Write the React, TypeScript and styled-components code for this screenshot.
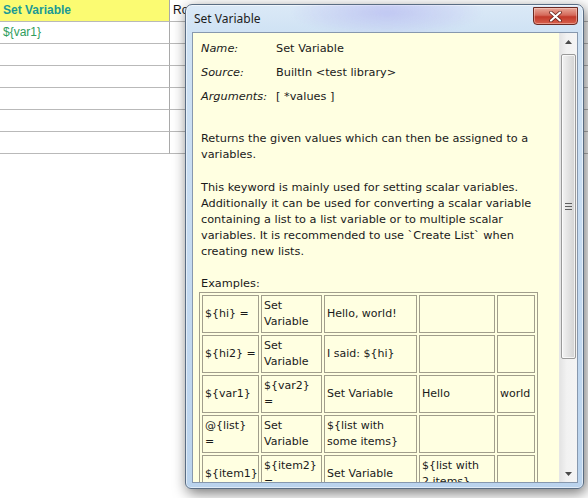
import React from "react";
import styled, { createGlobalStyle } from "styled-components";

const GlobalStyle = createGlobalStyle`
  html, body { margin: 0; padding: 0; background: #ffffff; }
  body { width: 588px; height: 498px; overflow: hidden; }
`;

const Stage = styled.div`
  position: relative;
  width: 588px;
  height: 498px;
  overflow: hidden;
  background: #ffffff;
`;

/* ---------- background grid editor ---------- */
const Sheet = styled.div`
  display: grid;
  grid-template-columns: 170px 1fr;
  width: 588px;
  font-family: "Liberation Sans", Arial, sans-serif;
  font-size: 12px;
`;

const SheetCell = styled.div<{ $head?: boolean; $first?: boolean }>`
  height: 21px;
  line-height: 21px;
  padding-left: 3px;
  border-bottom: 1px solid #b9b9b9;
  border-right: ${(p) => (p.$first ? "1px solid #a9a9a9" : "none")};
  background: ${(p) => (p.$head && p.$first ? "#fbfb72" : "#ffffff")};
  color: ${(p) => (p.$head ? (p.$first ? "#1a9a94" : "#111") : "#2f9d5c")};
  font-weight: ${(p) => (p.$head && p.$first ? "bold" : "normal")};
  white-space: nowrap;
  overflow: hidden;
`;

/* ---------- floating window ---------- */
const Window = styled.div`
  position: absolute;
  left: 185px;
  top: 4px;
  width: 399px;
  height: 485px;
  box-sizing: border-box;
  border: 1px solid #5a6d83;
  border-radius: 7px 7px 6px 6px;
  background: linear-gradient(to bottom, #dbe9f7 0px, #cfe2f4 28px, #c3d9f0 60%, #bad3ed 100%);
  box-shadow: inset 0 0 0 1px rgba(255, 255, 255, 0.55), 2px 4px 14px rgba(0, 0, 0, 0.55);
  display: flex;
  flex-direction: column;
  padding: 0 5px 5px 6px;
`;

const TitleBar = styled.div`
  position: relative;
  height: 27px;
  display: flex;
  align-items: flex-start;
  justify-content: space-between;
  overflow: hidden;
`;

const GlassGlow = styled.div`
  position: absolute;
  left: 100px;
  top: -8px;
  width: 190px;
  height: 38px;
  background: radial-gradient(ellipse at 50% 40%, rgba(150, 140, 235, 0.35), rgba(170, 160, 240, 0.12) 55%, rgba(200, 200, 255, 0) 72%);
  filter: blur(2px);
`;

const Title = styled.span`
  position: relative;
  margin: 6px 0 0 2px;
  font-family: "Noto Sans", "Open Sans", sans-serif;
  font-size: 12px;
  line-height: 16px;
  color: #1c1c1c;
`;

const CloseButton = styled.div`
  position: relative;
  width: 43px;
  height: 16px;
  margin-top: 2px;
  border: 1px solid #6b2a22;
  border-radius: 0 0 4px 4px;
  background: linear-gradient(to bottom, #e8a899 0%, #d5695a 45%, #c2392a 55%, #d7604c 100%);
  box-shadow: inset 0 0 0 1px rgba(255, 220, 210, 0.45);
  display: flex;
  align-items: center;
  justify-content: center;
`;

const Client = styled.div`
  flex: 1;
  display: flex;
  border: 1px solid #8798ae;
  background: #ffffe1;
  overflow: hidden;
  min-height: 0;
`;

const Scroller = styled.div`
  flex: 1;
  overflow: hidden;
  padding: 8px 0 0 8px;
  font-family: "DejaVu Sans", Verdana, sans-serif;
  font-size: 11.3px;
  line-height: 16px;
  color: #1a1a1a;
`;

const Meta = styled.div`
  display: grid;
  grid-template-columns: 75px auto;
  row-gap: 8px;
`;

const Label = styled.span`
  font-style: italic;
`;

const Para = styled.p<{ $top: number }>`
  margin: ${(p) => p.$top}px 0 0 0;
  white-space: nowrap;
`;

const ExampleTable = styled.table`
  width: 339px;
  border: 1px solid #a19e8c;
  border-spacing: 2px;
  table-layout: fixed;
  margin-left: -2px;
  font-size: 11px;
`;

const Cell = styled.td<{ $w: number }>`
  box-sizing: border-box;
  width: ${(p) => p.$w}px;
  height: 38px;
  border: 1px solid #a19e8c;
  padding: 2px 2px;
  vertical-align: middle;
  white-space: nowrap;
  overflow: hidden;
`;

/* ---------- scrollbar ---------- */
const ScrollBar = styled.div`
  width: 17px;
  display: flex;
  flex-direction: column;
  background: linear-gradient(to right, #e4e4e4, #f2f2f2 40%, #f4f4f4);
  border-left: 1px solid #e6e6e6;
`;

const ArrowBtn = styled.div`
  height: 17px;
  display: flex;
  align-items: center;
  justify-content: center;
`;

const Track = styled.div`
  flex: 1;
  display: flex;
  flex-direction: column;
  align-items: center;
`;

const Thumb = styled.div`
  width: 13px;
  height: 303px;
  margin-top: 4px;
  border: 1px solid #9a9a9a;
  border-radius: 2px;
  background: linear-gradient(to right, #f3f3f3, #e2e2e2 50%, #d3d3d3);
  box-shadow: inset 0 0 0 1px rgba(255, 255, 255, 0.7);
  display: flex;
  align-items: center;
  justify-content: center;
`;

const Arrow = ({ up }: { up?: boolean }) => (
  <svg width="7" height="4" viewBox="0 0 7 4">
    {up ? <path d="M0 4 L3.5 0 L7 4 Z" fill="#4a4a4a" /> : <path d="M0 0 L7 0 L3.5 4 Z" fill="#4a4a4a" />}
  </svg>
);

const Grip = () => (
  <svg width="7" height="7" viewBox="0 0 7 7">
    <path d="M0 0.5 H7 M0 3.5 H7 M0 6.5 H7" stroke="#5f5f5f" strokeWidth="1" />
  </svg>
);

const CloseGlyph = () => (
  <svg width="13" height="11" viewBox="0 0 13 11">
    <path d="M2 1.5 L11 9.5 M11 1.5 L2 9.5" stroke="#5a1a14" strokeWidth="3.6" strokeLinecap="round" />
    <path d="M2 1.5 L11 9.5 M11 1.5 L2 9.5" stroke="#ffffff" strokeWidth="2.2" strokeLinecap="round" />
  </svg>
);

const widths = [57, 61, 93, 76, 38];

const examples: string[][][] = [
  [["${hi} ="], ["Set", "Variable"], ["Hello, world!"], [], []],
  [["${hi2} ="], ["Set", "Variable"], ["I said: ${hi}"], [], []],
  [["${var1}"], ["${var2}", "="], ["Set Variable"], ["Hello"], ["world"]],
  [["@{list}", "="], ["Set", "Variable"], ["${list with", "some items}"], [], []],
  [["${item1}"], ["${item2}", "="], ["Set Variable"], ["${list with", "2 items}"], []],
];

const sheetRows = [
  ["Set Variable", "Ro"],
  ["${var1}", ""],
  ["", ""],
  ["", ""],
  ["", ""],
  ["", ""],
  ["", ""],
];

export default function App() {
  return (
    <Stage>
      <GlobalStyle />
      <Sheet>
        {sheetRows.map((r, i) => (
          <React.Fragment key={i}>
            <SheetCell $head={i === 0} $first>
              {r[0]}
            </SheetCell>
            <SheetCell $head={i === 0}>{r[1]}</SheetCell>
          </React.Fragment>
        ))}
      </Sheet>

      <Window>
        <TitleBar>
          <GlassGlow />
          <Title>Set Variable</Title>
          <CloseButton>
            <CloseGlyph />
          </CloseButton>
        </TitleBar>
        <Client>
          <Scroller>
            <Meta>
              <Label>Name:</Label>
              <span>Set Variable</span>
              <Label>Source:</Label>
              <span>BuiltIn &lt;test library&gt;</span>
              <Label>Arguments:</Label>
              <span>[ *values ]</span>
            </Meta>
            <Para $top={26}>
              Returns the given values which can then be assigned to a
              <br />
              variables.
            </Para>
            <Para $top={17}>
              This keyword is mainly used for setting scalar variables.
              <br />
              Additionally it can be used for converting a scalar variable
              <br />
              containing a list to a list variable or to multiple scalar
              <br />
              variables. It is recommended to use `Create List` when
              <br />
              creating new lists.
            </Para>
            <Para $top={16}>Examples:</Para>
            <ExampleTable>
              <tbody>
                {examples.map((row, ri) => (
                  <tr key={ri}>
                    {row.map((lines, ci) => (
                      <Cell key={ci} $w={widths[ci]}>
                        {lines.map((l, li) => (
                          <React.Fragment key={li}>
                            {li > 0 && <br />}
                            {l}
                          </React.Fragment>
                        ))}
                      </Cell>
                    ))}
                  </tr>
                ))}
              </tbody>
            </ExampleTable>
          </Scroller>
          <ScrollBar>
            <ArrowBtn>
              <Arrow up />
            </ArrowBtn>
            <Track>
              <Thumb>
                <Grip />
              </Thumb>
            </Track>
            <ArrowBtn>
              <Arrow />
            </ArrowBtn>
          </ScrollBar>
        </Client>
      </Window>
    </Stage>
  );
}
